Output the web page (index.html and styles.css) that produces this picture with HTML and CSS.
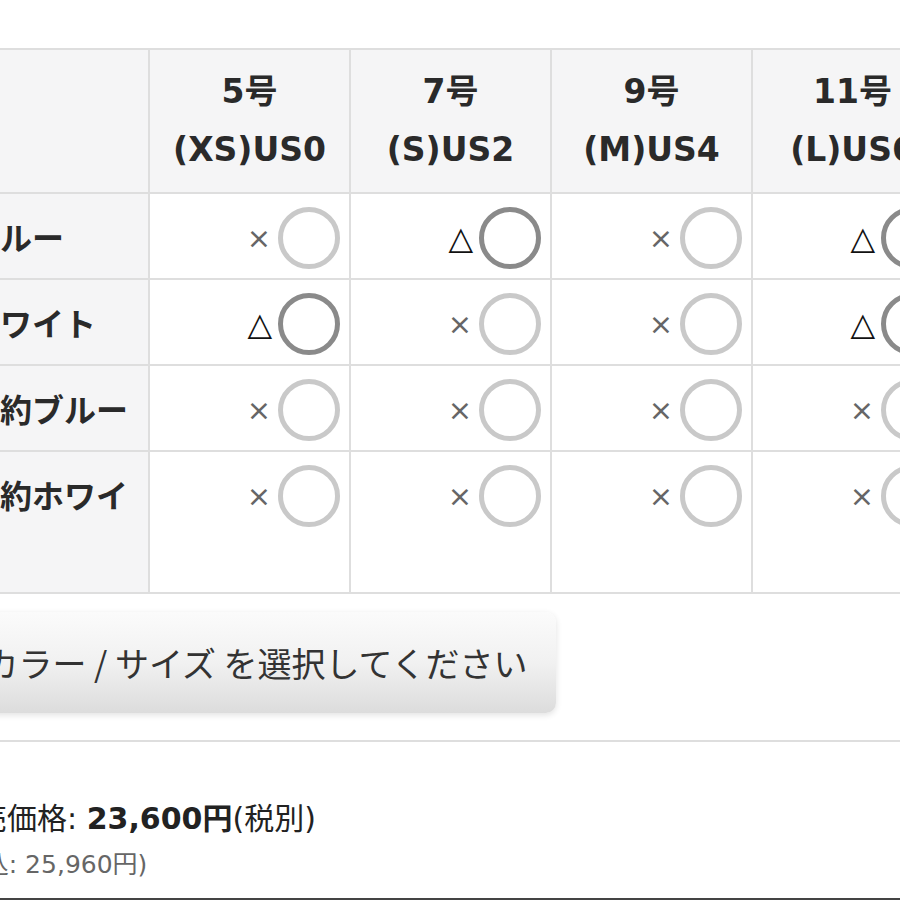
FILE: index.html
```html
<!DOCTYPE html>
<html lang="ja">
<head>
<meta charset="utf-8">
<title>カラー / サイズ</title>
<link rel="stylesheet" href="styles.css">
</head>
<body>
<div class="page">
  <div class="grid">
    <div class="corner"></div>
    <div class="head">5号<br>(XS)US0</div>
    <div class="head">7号<br>(S)US2</div>
    <div class="head">9号<br>(M)US4</div>
    <div class="head">11号<br>(L)US6</div>
    <div class="head">13号<br>(XL)US8</div>

    <div class="label">ブルー</div>
    <div class="cell"><span class="mark x">×</span><span class="radio"></span></div>
    <div class="cell"><span class="mark tri">△</span><span class="radio dark"></span></div>
    <div class="cell"><span class="mark x">×</span><span class="radio"></span></div>
    <div class="cell"><span class="mark tri">△</span><span class="radio dark"></span></div>
    <div class="cell"><span class="mark x">×</span><span class="radio"></span></div>

    <div class="label">ホワイト</div>
    <div class="cell"><span class="mark tri">△</span><span class="radio dark"></span></div>
    <div class="cell"><span class="mark x">×</span><span class="radio"></span></div>
    <div class="cell"><span class="mark x">×</span><span class="radio"></span></div>
    <div class="cell"><span class="mark tri">△</span><span class="radio dark"></span></div>
    <div class="cell"><span class="mark x">×</span><span class="radio"></span></div>

    <div class="label">予約ブルー</div>
    <div class="cell"><span class="mark x">×</span><span class="radio"></span></div>
    <div class="cell"><span class="mark x">×</span><span class="radio"></span></div>
    <div class="cell"><span class="mark x">×</span><span class="radio"></span></div>
    <div class="cell"><span class="mark x">×</span><span class="radio"></span></div>
    <div class="cell"><span class="mark x">×</span><span class="radio"></span></div>

    <div class="label">予約ホワイト</div>
    <div class="cell"><span class="mark x">×</span><span class="radio"></span></div>
    <div class="cell"><span class="mark x">×</span><span class="radio"></span></div>
    <div class="cell"><span class="mark x">×</span><span class="radio"></span></div>
    <div class="cell"><span class="mark x">×</span><span class="radio"></span></div>
    <div class="cell"><span class="mark x">×</span><span class="radio"></span></div>
  </div>

  <div class="button">カラー / サイズ を選択してください</div>

  <div class="rule"></div>

  <div class="price">
    <div class="price-main">販売価格: <b>23,600円</b>(税別)</div>
    <div class="price-sub">(税込: 25,960円)</div>
  </div>

  <div class="edge"></div>
</div>
</body>
</html>
```
FILE: styles.css
```css
html, body {
  margin: 0;
  padding: 0;
  background: #ffffff;
  overflow: hidden;
}

.page {
  margin-left: -46px;
  padding-top: 48px;
  width: 1300px;
  font-family: "Noto Sans CJK JP", sans-serif;
  color: #333;
}

.grid {
  display: grid;
  grid-template-columns: 192px repeat(5, 199px);
  gap: 2px;
  background: #dedede;
  border: 2px solid #dedede;
  width: max-content;
}

.corner,
.head,
.label {
  background: #f5f5f6;
}

.head {
  padding: 13px 0;
  line-height: 58px;
  text-align: center;
  font-family: "DejaVu Sans", "Noto Sans CJK JP", sans-serif;
  font-weight: bold;
  font-size: 33px;
  color: #2a2a2a;
}

.label {
  padding: 14px 12px;
  line-height: 56px;
  font-weight: bold;
  font-size: 32px;
  color: #2a2a2a;
}

.cell {
  background: #fff;
  display: flex;
  justify-content: flex-end;
  align-items: flex-start;
  padding: 13px 9px 0 0;
}

.cell .mark {
  height: 62px;
  display: flex;
  align-items: center;
  margin-right: 7px;
  font-family: "DejaVu Sans", sans-serif;
}

.mark.x {
  font-size: 29px;
  color: #666;
}

.mark.tri {
  font-size: 32px;
  font-weight: bold;
  color: #111;
  margin-right: 6px;
}

.radio {
  width: 62px;
  height: 62px;
  box-sizing: border-box;
  border: 5px solid #c9c9c9;
  border-radius: 50%;
}

.radio.dark {
  border-color: #8a8a8a;
}

.button {
  margin: 18px 0 0 2px;
  width: 600px;
  height: 101px;
  border-radius: 10px;
  background: linear-gradient(#fbfbfb 0%, #f1f1f1 50%, #dcdcdc 100%);
  box-shadow: 0 2px 6px rgba(0, 0, 0, 0.12);
  display: flex;
  align-items: center;
  justify-content: center;
  font-size: 34px;
  color: #333;
  white-space: nowrap;
}

.rule {
  margin-top: 27px;
  height: 2px;
  background: #dedede;
}

.price {
  margin-top: 57px;
  margin-left: -7px;
  font-family: "DejaVu Sans", "Noto Sans CJK JP", sans-serif;
}

.price-main {
  font-size: 30px;
  line-height: 40px;
  color: #222;
}

.price-main b {
  font-weight: bold;
}

.price-sub {
  margin-top: 9px;
  margin-left: 2px;
  font-size: 25px;
  line-height: 34px;
  color: #666;
}

.edge {
  margin-top: 16px;
  height: 2px;
  background: #444;
}
```
